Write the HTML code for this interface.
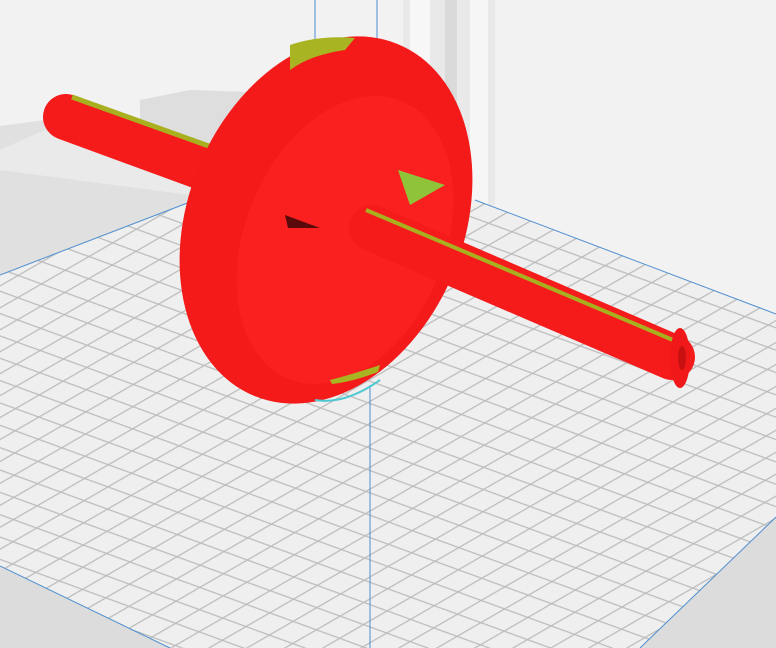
<!DOCTYPE html>
<html><head><meta charset="utf-8"><style>
html,body{margin:0;padding:0;background:#f1f1f1;width:776px;height:648px;overflow:hidden}
svg{display:block}
</style></head><body>
<svg width="776" height="648" viewBox="0 0 776 648" xmlns="http://www.w3.org/2000/svg">
<defs>
<pattern id="ga" width="40" height="21" patternUnits="userSpaceOnUse" patternTransform="rotate(20)">
<line x1="0" y1="0.6" x2="40" y2="0.6" stroke="#bcbcbc" stroke-width="1.3"/>
</pattern>
<pattern id="gb" width="40" height="19" patternUnits="userSpaceOnUse" patternTransform="rotate(-30)">
<line x1="0" y1="0.6" x2="40" y2="0.6" stroke="#bcbcbc" stroke-width="1.3"/>
</pattern>
<clipPath id="plate"><polygon points="0,275 190,202 475,200 776,314 776,517 640,648 170,648 0,566"/></clipPath>
</defs>
<rect width="776" height="648" fill="#f2f2f2"/>
<polygon points="140,100 190,90 250,92 250,210 190,215 140,190" fill="#dedede"/>
<polygon points="0,126 45,120 200,170 200,220 0,275" fill="#e0e0e0"/>
<polygon points="0,150 45,130 200,185 190,195 0,170" fill="#eaeaea"/>
<rect x="403" y="0" width="92" height="205" fill="#e9e9e9"/>
<rect x="410" y="0" width="20" height="205" fill="#f7f7f7"/>
<rect x="445" y="0" width="12" height="205" fill="#dadada"/>
<rect x="470" y="0" width="18" height="205" fill="#f6f6f6"/>
<g clip-path="url(#plate)">
<rect width="776" height="648" fill="#efefef"/>
<rect width="776" height="648" fill="url(#ga)"/>
<rect width="776" height="648" fill="url(#gb)"/>
</g>
<polygon points="0,566 170,648 0,648" fill="#dcdcdc"/>
<polygon points="776,517 640,648 776,648" fill="#dcdcdc"/>
<polyline points="0,275 190,202" stroke="#4f8fd0" stroke-width="1" fill="none"/>
<polyline points="475,200 776,314" stroke="#4f8fd0" stroke-width="1" fill="none"/>
<polyline points="0,566 170,648" stroke="#4f8fd0" stroke-width="1" fill="none"/>
<polyline points="776,517 640,648" stroke="#4f8fd0" stroke-width="1" fill="none"/>
<line x1="315" y1="0" x2="315" y2="95" stroke="#4f8fd0"/>
<line x1="377" y1="0" x2="377" y2="40" stroke="#4f8fd0"/>
<line x1="370" y1="385" x2="370" y2="648" stroke="#4f8fd0"/>
<line x1="66" y1="117" x2="320" y2="210" stroke="#f51b1b" stroke-width="46" stroke-linecap="round"/>
<line x1="72" y1="97" x2="220" y2="150" stroke="#a8b020" stroke-width="5"/>
<ellipse cx="326" cy="220" rx="138" ry="190" transform="rotate(22 326 220)" fill="#f41a1a"/>
<ellipse cx="345" cy="240" rx="100" ry="150" transform="rotate(22 345 240)" fill="#fa2020"/>
<path d="M290 45 Q320 35 355 38 L345 50 Q310 55 290 70Z" fill="#a8b422"/>
<polygon points="398,170 445,185 410,205" fill="#8fc43a"/>
<polygon points="285,215 320,228 288,228" fill="#5a0a0a"/>
<path d="M330 380 Q350 375 380 365 L378 372 Q352 382 332 384Z" fill="#a8b422"/>
<path d="M315 400 Q345 405 380 380" stroke="#4ec8d0" stroke-width="2" fill="none"/>
<line x1="372" y1="228" x2="672" y2="357" stroke="#f51b1b" stroke-width="46" stroke-linecap="round"/>
<line x1="366" y1="210" x2="680" y2="343" stroke="#a8b020" stroke-width="4"/>
<ellipse cx="680" cy="358" rx="10" ry="30" fill="#f01818"/>
<ellipse cx="682" cy="358" rx="4" ry="12" fill="#c81010"/>
</svg>
</body></html>
